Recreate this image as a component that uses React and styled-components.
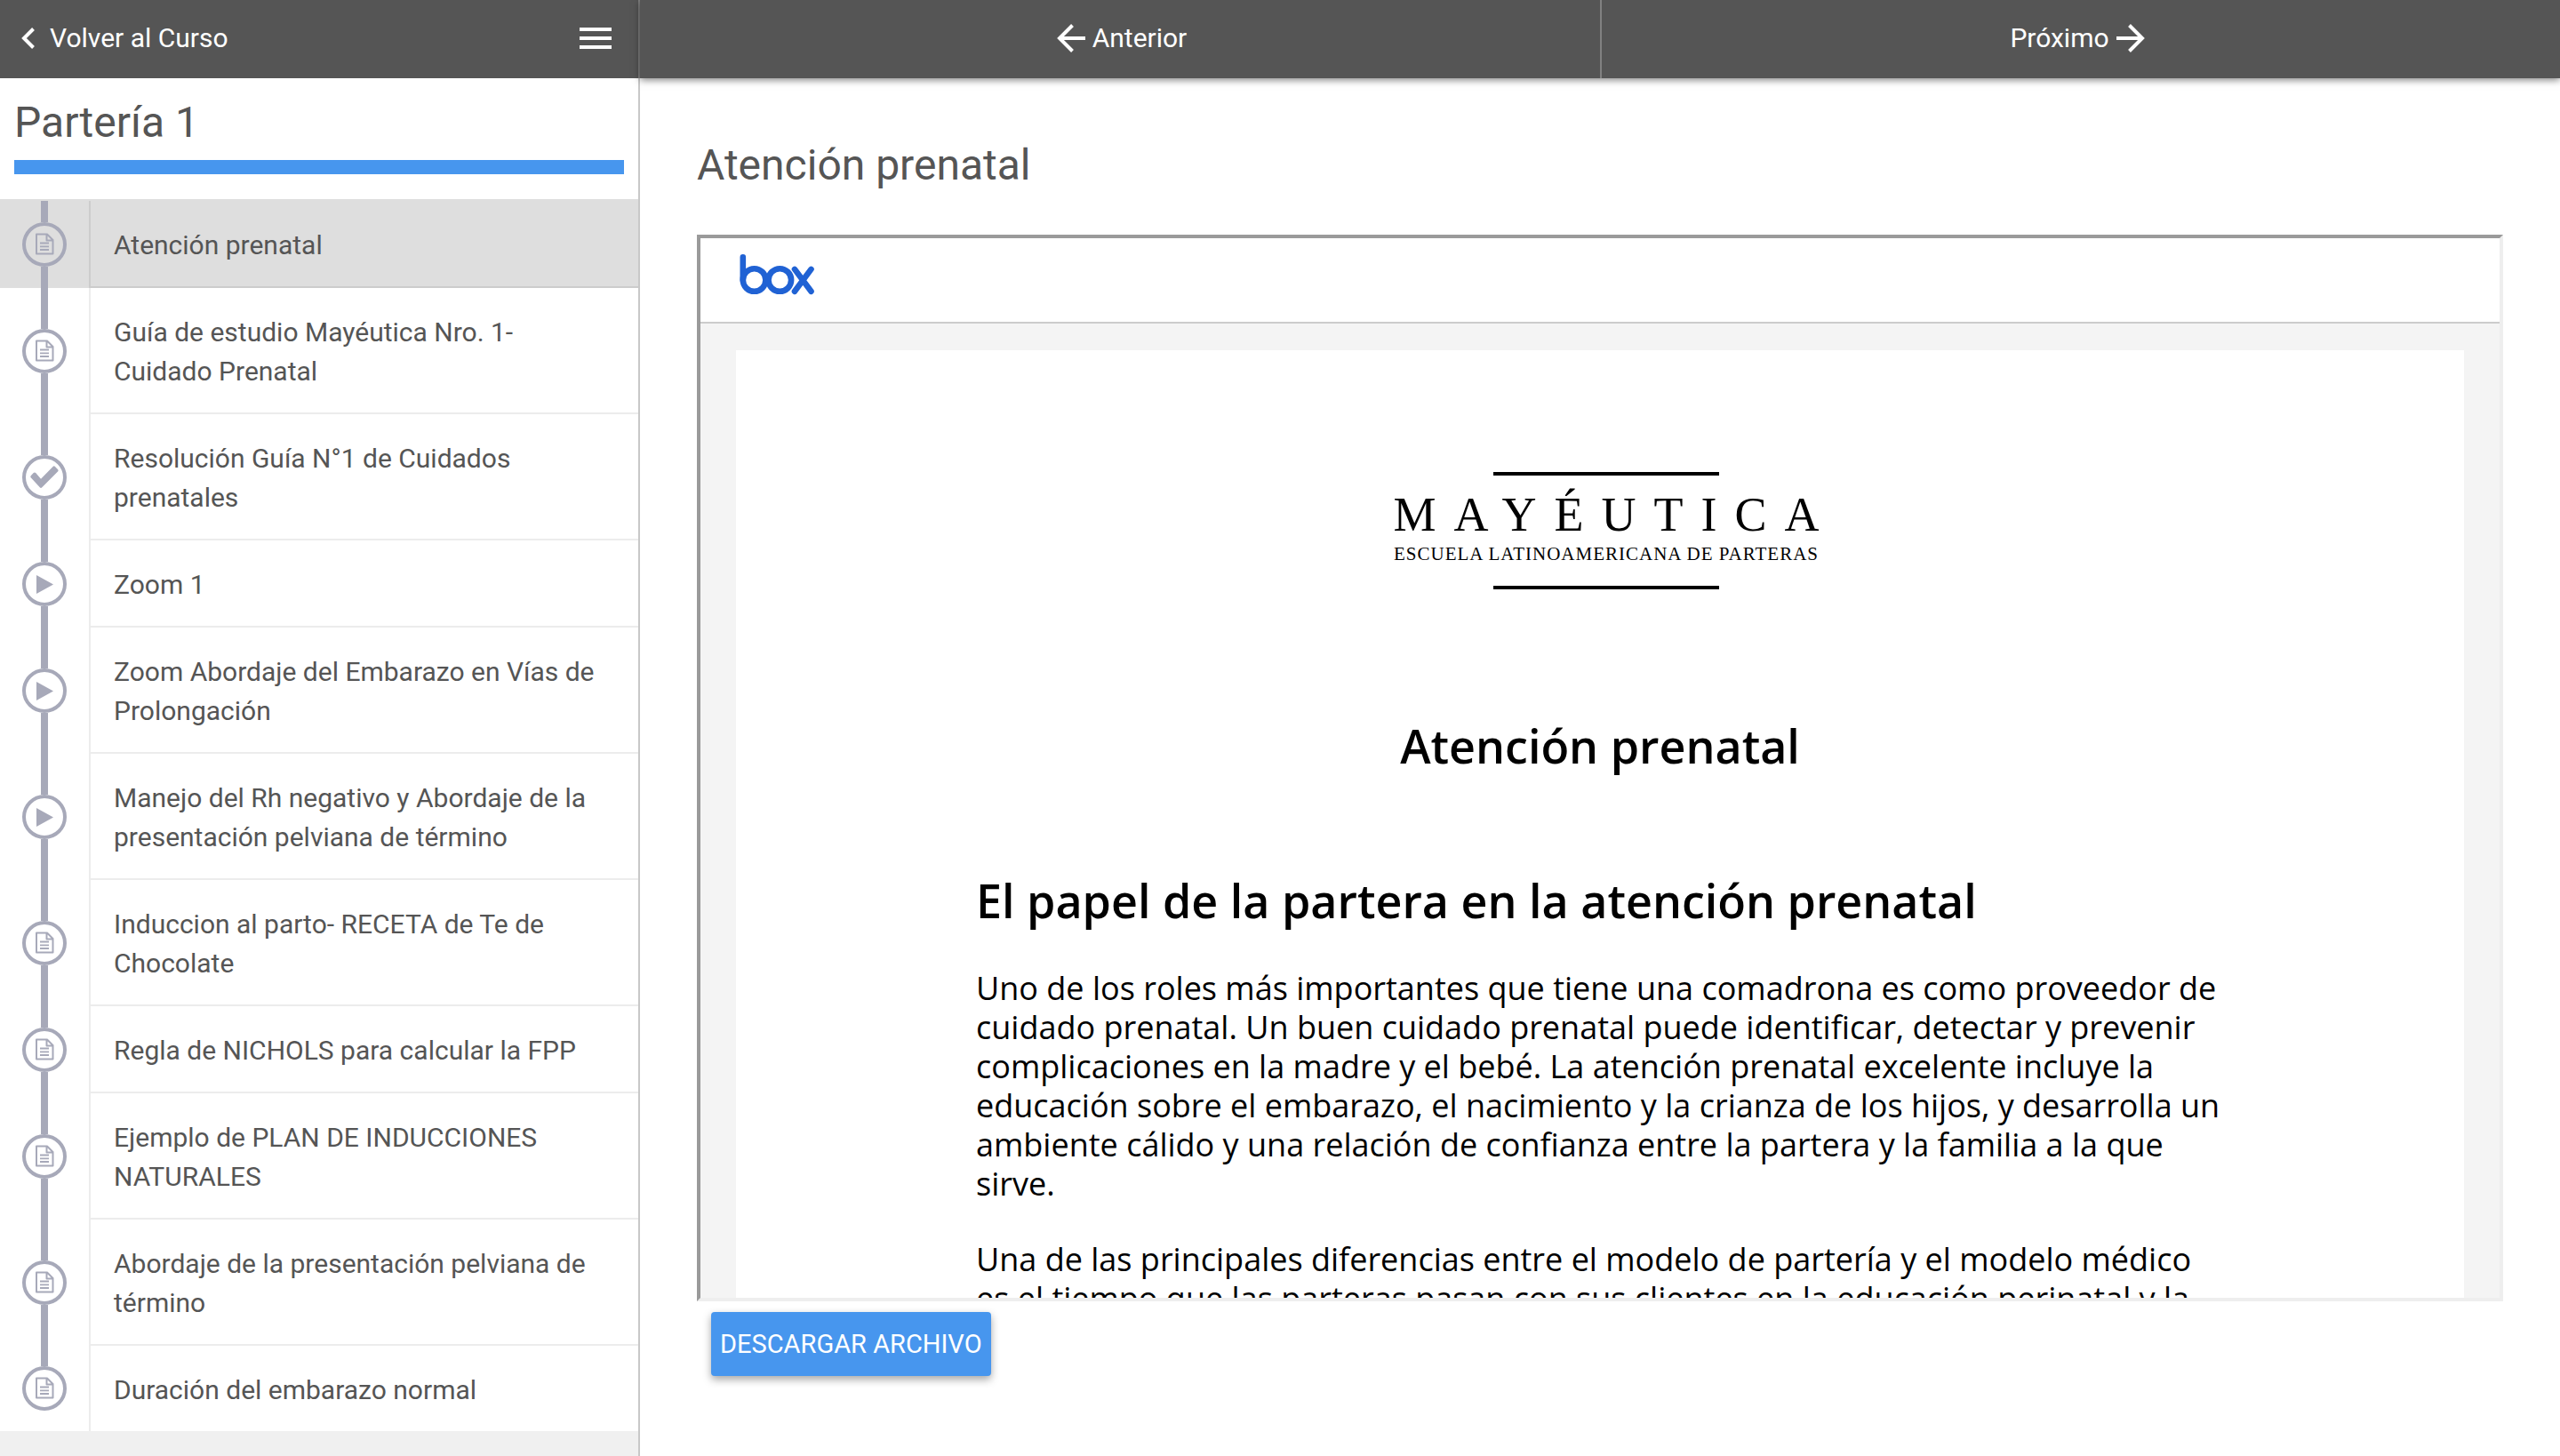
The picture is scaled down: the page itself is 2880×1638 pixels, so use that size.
import React from "react";
import styled, { createGlobalStyle } from "styled-components";

const colors = {
  bar: "#555555",
  text: "#555555",
  accent: "#4796ee",
  rail: "#a7a9b9",
  line: "#ececec",
  edge: "#c8c8c8",
};

const GlobalStyle = createGlobalStyle`
  *, *::before, *::after { box-sizing: border-box; }
  body {
    margin: 0;
    background: #ffffff;
    color: ${colors.text};
    font-family: Roboto, "Liberation Sans", sans-serif;
  }
  h1, h2, h3, p, ul { margin: 0; padding: 0; }
`;

const Layout = styled.div`
  display: grid;
  grid-template-columns: 25% minmax(0, 1fr);
  min-height: 100vh;
`;

const Sidebar = styled.aside`
  display: flex;
  flex-direction: column;
  border-right: 2px solid ${colors.edge};
  background: #f0f0f0;
`;

const SidebarBar = styled.div`
  display: flex;
  align-items: center;
  justify-content: space-between;
  height: 88px;
  margin-right: -2px;
  padding: 0 30px 2px 24px;
  background: ${colors.bar};
  border-right: 2px solid #818181;
`;

const BackLink = styled.a`
  display: flex;
  align-items: center;
  gap: 16px;
  color: #ffffff;
  font-size: 30px;
  line-height: 44px;
  text-decoration: none;
`;

const MenuButton = styled.button`
  display: flex;
  padding: 0;
  border: 0;
  background: none;
  color: #ffffff;
`;

const CourseHead = styled.div`
  padding: 20px 16px 28px;
  background: #ffffff;
`;

const CourseTitle = styled.h1`
  font-size: 48px;
  font-weight: 400;
  line-height: 60px;
`;

const Progress = styled.div`
  height: 16px;
  margin-top: 12px;
  background: ${colors.accent};
`;

const LessonList = styled.ul`
  list-style: none;
  border-top: 2px solid #dedede;
  background: #ffffff;
`;

const Rail = styled.span`
  display: flex;
  flex-direction: column;
  align-items: center;
  width: 100px;

  &::before,
  &::after {
    content: "";
    flex: 1;
    width: 8px;
    background: ${colors.rail};
  }
`;

const LessonLabel = styled.span`
  flex: 1;
  padding: 28px 24px 24px 26px;
  border-left: 2px solid ${colors.line};
  border-bottom: 2px solid ${colors.line};
  font-size: 30px;
  line-height: 44px;
`;

const Lesson = styled.a`
  display: flex;
  color: inherit;
  text-decoration: none;
  background: ${(p) => (p.$active ? "#dedede" : "#ffffff")};

  ${LessonLabel} {
    border-color: ${(p) => (p.$active ? "#cccccc" : colors.line)};
  }
`;

const LessonItem = styled.li`
  &:last-child ${LessonLabel} {
    border-bottom: 0;
  }
  &:last-child ${Rail}::after {
    background: none;
  }
`;

const Badge = styled.span`
  display: flex;
  align-items: center;
  justify-content: center;
  width: 50px;
  height: 50px;
  border: 4px solid ${colors.rail};
  border-radius: 50%;
  color: ${colors.rail};
`;

const Main = styled.main`
  display: flex;
  flex-direction: column;
`;

const NavBar = styled.nav`
  display: grid;
  grid-template-columns: 1fr 1fr;
  height: 88px;
  background: ${colors.bar};
  box-shadow: 0 2px 8px rgba(0, 0, 0, 0.5);
`;

const NavLink = styled.a`
  display: flex;
  align-items: center;
  justify-content: center;
  gap: 8px;
  padding: 0 0 2px 4px;
  color: #ffffff;
  font-size: 30px;
  line-height: 44px;
  text-decoration: none;

  & + & {
    padding: 0 8px 2px 0;
    border-left: 2px solid #818181;
  }
`;

const Content = styled.section`
  padding: 68px 64px 64px;
`;

const ContentTitle = styled.h2`
  font-size: 48px;
  font-weight: 400;
  line-height: 60px;
`;

const Viewer = styled.div`
  display: flex;
  flex-direction: column;
  height: 1200px;
  margin-top: 48px;
  border: 4px solid;
  border-color: #9a9a9a #eeeeee #eeeeee #9a9a9a;
  overflow: hidden;
`;

const ViewerBar = styled.div`
  flex: none;
  display: flex;
  align-items: flex-start;
  height: 96px;
  padding: 18px 44px;
  border-bottom: 2px solid #cccccc;
`;

const ViewerBody = styled.div`
  flex: 1;
  min-height: 0;
  padding: 30px 40px 0;
  background: #f4f4f4;
  overflow: hidden;
`;

const Sheet = styled.article`
  padding: 137px 270px 60px;
  background: #ffffff;
  color: #000000;
  font-family: "Open Sans", "Noto Sans", sans-serif;
`;

const Brand = styled.div`
  display: flex;
  flex-direction: column;
  align-items: center;
  padding-left: 14px;
  font-family: "Liberation Serif", serif;
`;

const BrandRule = styled.div`
  width: 254px;
  height: 4px;
  background: #000000;
`;

const BrandName = styled.div`
  margin-top: 14px;
  padding-left: 20px;
  font-size: 54px;
  line-height: 60px;
  letter-spacing: 20px;
  white-space: nowrap;
`;

const BrandTag = styled.div`
  margin: 0 0 22px;
  font-size: 21px;
  line-height: 28px;
  letter-spacing: 1px;
  white-space: nowrap;
`;

const SheetTitle = styled.h2`
  margin-top: 140px;
  font-size: 52px;
  font-weight: 600;
  line-height: 72px;
  text-align: center;
  white-space: nowrap;
`;

const SheetHeading = styled.h3`
  margin-top: 102px;
  font-size: 52px;
  font-weight: 600;
  line-height: 72px;
  white-space: nowrap;
`;

const Paragraph = styled.p`
  margin-top: 41px;
  font-size: 36px;
  line-height: 44px;
  white-space: nowrap;
`;

const DownloadButton = styled.button`
  display: block;
  height: 72px;
  margin: 12px 16px;
  padding: 0 10px;
  border: 0;
  border-radius: 4px;
  background: ${colors.accent};
  box-shadow: 0 4px 10px rgba(0, 0, 0, 0.35);
  color: #ffffff;
  font-family: inherit;
  font-size: 29px;
  line-height: 44px;
  text-transform: uppercase;
`;

const ChevronIcon = () => (
  <svg width="16" height="24" viewBox="0 0 16 24" fill="none" stroke="currentColor" strokeWidth="4" aria-hidden="true">
    <path d="M13.5 1.5 3 12l10.5 10.5" />
  </svg>
);

const MenuIcon = () => (
  <svg width="36" height="24" viewBox="0 0 36 24" fill="currentColor" aria-hidden="true">
    <path d="M0 0h36v4H0zM0 10h36v4H0zM0 20h36v4H0z" />
  </svg>
);

const ArrowLeftIcon = () => (
  <svg width="32" height="32" viewBox="0 0 32 32" fill="none" stroke="currentColor" strokeWidth="4" aria-hidden="true">
    <path d="M32 16H3M17.5 1.5 3 16l14.5 14.5" />
  </svg>
);

const ArrowRightIcon = () => (
  <svg width="32" height="32" viewBox="0 0 32 32" fill="none" stroke="currentColor" strokeWidth="4" aria-hidden="true">
    <path d="M0 16h29M14.5 1.5 29 16 14.5 30.5" />
  </svg>
);

const DocIcon = () => (
  <svg width="22" height="26" viewBox="0 0 22 26" fill="none" stroke="currentColor" aria-hidden="true">
    <path strokeWidth="2" strokeLinejoin="round" d="M2 1.5h12L20.500 8v15.500H2zM13.500 1.500v7h7" />
    <path strokeWidth="1.800" d="M6 11.500h10M6 15.300h10M6 19h10" />
  </svg>
);

const CheckIcon = () => (
  <svg width="32" height="26" viewBox="0 0 32 26" fill="currentColor" aria-hidden="true">
    <path d="M.9 11 3.700 8a1.800 1.800 0 0 1 2.500 0L12 14.700 25.500.900a1.800 1.800 0 0 1 2.500 0l3 3a1.800 1.800 0 0 1 0 2.500L13.300 24.300a1.800 1.800 0 0 1-2.500 0L.9 13.500a1.800 1.800 0 0 1 0-2.500z" />
  </svg>
);

const PlayIcon = () => (
  <svg width="20" height="22" viewBox="0 0 20 22" fill="currentColor" aria-hidden="true">
    <path d="M1 1v21l19-10.500z" />
  </svg>
);

const BoxLogo = () => (
  <svg width="84" height="46" viewBox="0 0 84 46" fill="none" stroke="#2062d4" strokeWidth="6.600" strokeLinecap="round" role="img" aria-label="box">
    <path d="M3.800 3.400V29" />
    <circle cx="16.600" cy="29" r="12.800" />
    <circle cx="45.300" cy="29" r="12.800" />
    <path d="M62 16.900 80.500 41.800M80.500 16.900 62 41.800" />
  </svg>
);

const icons = { doc: DocIcon, check: CheckIcon, play: PlayIcon };

const lessons = [
  { kind: "doc", lines: ["Atención prenatal"] },
  { kind: "doc", lines: ["Guía de estudio Mayéutica Nro. 1-", "Cuidado Prenatal"] },
  { kind: "check", lines: ["Resolución Guía N°1 de Cuidados", "prenatales"] },
  { kind: "play", lines: ["Zoom 1"] },
  { kind: "play", lines: ["Zoom Abordaje del Embarazo en Vías de", "Prolongación"] },
  { kind: "play", lines: ["Manejo del Rh negativo y Abordaje de la", "presentación pelviana de término"] },
  { kind: "doc", lines: ["Induccion al parto- RECETA de Te de", "Chocolate"] },
  { kind: "doc", lines: ["Regla de NICHOLS para calcular la FPP"] },
  { kind: "doc", lines: ["Ejemplo de PLAN DE INDUCCIONES", "NATURALES"] },
  { kind: "doc", lines: ["Abordaje de la presentación pelviana de", "término"] },
  { kind: "doc", lines: ["Duración del embarazo normal"] },
];

const paragraphs = [
  [
    "Uno de los roles más importantes que tiene una comadrona es como proveedor de",
    "cuidado prenatal. Un buen cuidado prenatal puede identificar, detectar y prevenir",
    "complicaciones en la madre y el bebé. La atención prenatal excelente incluye la",
    "educación sobre el embarazo, el nacimiento y la crianza de los hijos, y desarrolla un",
    "ambiente cálido y una relación de confianza entre la partera y la familia a la que",
    "sirve.",
  ],
  [
    "Una de las principales diferencias entre el modelo de partería y el modelo médico",
    "es el tiempo que las parteras pasan con sus clientes en la educación perinatal y la",
  ],
];

const Lines = ({ lines }) =>
  lines.map((line, i) => (
    <React.Fragment key={line}>
      {i > 0 && <br />}
      {line}
    </React.Fragment>
  ));

export default function App() {
  return (
    <>
      <GlobalStyle />
      <Layout>
        <Sidebar>
          <SidebarBar>
            <BackLink href="#curso">
              <ChevronIcon />
              Volver al Curso
            </BackLink>
            <MenuButton type="button" aria-label="Menú">
              <MenuIcon />
            </MenuButton>
          </SidebarBar>
          <CourseHead>
            <CourseTitle>Partería 1</CourseTitle>
            <Progress role="progressbar" aria-label="Progreso" aria-valuenow={100} />
          </CourseHead>
          <LessonList>
            {lessons.map(({ kind, lines }, i) => {
              const Icon = icons[kind];
              return (
                <LessonItem key={lines[0]}>
                  <Lesson href={`#leccion-${i + 1}`} $active={i === 0}>
                    <Rail>
                      <Badge>
                        <Icon />
                      </Badge>
                    </Rail>
                    <LessonLabel>
                      <Lines lines={lines} />
                    </LessonLabel>
                  </Lesson>
                </LessonItem>
              );
            })}
          </LessonList>
        </Sidebar>
        <Main>
          <NavBar>
            <NavLink href="#anterior">
              <ArrowLeftIcon />
              Anterior
            </NavLink>
            <NavLink href="#proximo">
              Próximo
              <ArrowRightIcon />
            </NavLink>
          </NavBar>
          <Content>
            <ContentTitle>Atención prenatal</ContentTitle>
            <Viewer>
              <ViewerBar>
                <BoxLogo />
              </ViewerBar>
              <ViewerBody>
                <Sheet>
                  <Brand>
                    <BrandRule />
                    <BrandName>MAYÉUTICA</BrandName>
                    <BrandTag>ESCUELA LATINOAMERICANA DE PARTERAS</BrandTag>
                    <BrandRule />
                  </Brand>
                  <SheetTitle>Atención prenatal</SheetTitle>
                  <SheetHeading>El papel de la partera en la atención prenatal</SheetHeading>
                  {paragraphs.map((lines) => (
                    <Paragraph key={lines[0]}>
                      <Lines lines={lines} />
                    </Paragraph>
                  ))}
                </Sheet>
              </ViewerBody>
            </Viewer>
            <DownloadButton type="button">Descargar archivo</DownloadButton>
          </Content>
        </Main>
      </Layout>
    </>
  );
}
